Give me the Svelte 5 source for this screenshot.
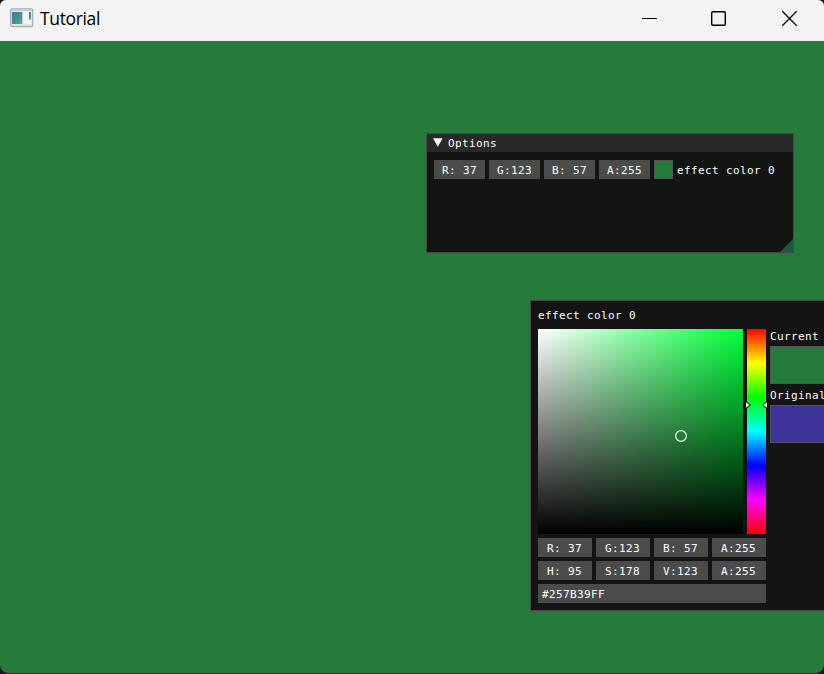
<script>
  const rgba = ['R: 37', 'G:123', 'B: 57', 'A:255'];
  const hsva = ['H: 95', 'S:178', 'V:123', 'A:255'];
</script>

<div class="app">
  <header>
    <svg class="logo" width="24" height="20" viewBox="0 0 24 20">
      <defs>
        <linearGradient id="pane" x1="0" y1="0" x2="1" y2="1">
          <stop offset="0" stop-color="#4778ae" />
          <stop offset=".55" stop-color="#419389" />
          <stop offset="1" stop-color="#55b777" />
        </linearGradient>
      </defs>
      <rect x=".7" y=".9" width="22" height="17.6" rx="1.2" fill="#e6e8ea" stroke="#a9aeb4" stroke-width="1.3" />
      <rect x="1.5" y="1.4" width="20.4" height="1.5" fill="#c5cbd1" />
      <rect x="2" y="4" width="10.3" height="12" fill="url(#pane)" />
      <rect x="13.5" y="4" width="4.8" height="8" fill="#fafafa" />
      <rect x="19" y="4" width="2" height="7.5" fill="url(#pane)" />
      <rect x="13.5" y="12.8" width="7.5" height="3.2" fill="#f3f3f3" />
    </svg>
    <span class="title">Tutorial</span>
    <svg class="controls" width="160" height="20" viewBox="0 0 160 20" fill="none" stroke="#000">
      <path d="M2 9.5h15" />
      <rect x="71.7" y="2.7" width="13.6" height="13.6" rx="1.2" stroke-width="1.4" />
      <path d="M142.3 2.3l14.4 14.4M156.7 2.3L142.3 16.7" stroke-width="1.3" />
    </svg>
  </header>

  <main>
    <section class="window options">
      <div class="bar">
        <svg width="10" height="10" viewBox="0 0 10 10"><path d="M0 .2h9.6L4.8 8.8z" fill="#fff" /></svg>
        <span>Options</span>
      </div>
      <div class="row">
        {#each rgba as v}<div class="field">{v}</div>{/each}
        <div class="swatch small"></div>
        <span class="label">effect color 0</span>
      </div>
      <div class="grip"></div>
    </section>

    <section class="window picker">
      <div class="heading">effect color 0</div>
      <div class="columns">
        <div class="square"><svg class="cursor" width="14" height="14" viewBox="0 0 14 14" fill="none">
          <circle cx="7" cy="7" r="6.2" stroke="#555" stroke-opacity=".7" />
          <circle cx="7" cy="7" r="5.4" stroke="#eee" stroke-width="1.3" />
        </svg></div>
        <div class="hue"><svg class="arrows" width="23" height="8" viewBox="0 0 23 8">
          <path d="M1 0L6 4L1 8zM22 0L17 4L22 8z" fill="#111" />
          <path d="M1 1.2L4.6 4L1 6.8zM22 1.2L18.4 4L22 6.8z" fill="#fff" />
        </svg></div>
        <div class="compare">
          <span>Current</span>
          <div class="swatch big"></div>
          <span>Original</span>
          <div class="swatch big original"></div>
        </div>
      </div>
      <div class="row">
        {#each rgba as v}<div class="field">{v}</div>{/each}
      </div>
      <div class="row">
        {#each hsva as v}<div class="field">{v}</div>{/each}
      </div>
      <div class="field hex">#257B39FF</div>
    </section>
  </main>
</div>

<style>
  :global(body) { background: #191919; }
  .app {
    width: 824px;
    height: 674px;
    display: flex;
    flex-direction: column;
    overflow: hidden;
    border-radius: 6px 6px 9px 9px;
    background: #257b39;
    border-bottom: 1px solid #303030;
    box-sizing: border-box;
    font: 11px/22px 'DejaVu Sans Mono', monospace;
    letter-spacing: 0.378px;
    color: #fff;
  }
  header {
    flex: none;
    height: 41px;
    box-sizing: border-box;
    display: flex;
    align-items: flex-start;
    padding: 8px 24px 0 10px;
    background: #f3f3f3;
  }
  .title {
    margin: -1px 0 0 6px;
    font: 17.5px/22px 'Open Sans', 'Noto Sans', sans-serif;
    letter-spacing: -0.35px;
    color: #000;
  }
  .controls { margin-left: auto; margin-top: 1px; }
  main { flex: 1; position: relative; }
  .window {
    position: absolute;
    box-sizing: border-box;
    border: 1px solid #46464b;
  }
  .options {
    left: 426px;
    top: 92px;
    width: 368px;
    height: 120px;
    background: #121512;
  }
  .bar {
    height: 18px;
    display: flex;
    align-items: center;
    gap: 5px;
    padding-left: 6px;
    background: #292929;
    line-height: 18px;
  }
  .bar span { padding-top: 2px; }
  .row { display: flex; gap: 4px; margin-bottom: 4px; }
  .options .row { padding: 8px 7px 0; }
  .field, .label { height: 19px; white-space: pre; }
  .field {
    box-sizing: border-box;
    width: 54px;
    padding-left: 9px;
    background: #4b4b4b;
  }
  .options .field { width: 51px; padding-left: 8px; background: #4a4c4a; }
  .swatch { box-sizing: border-box; border: 1px solid #505256; background: #257b39; }
  .small { width: 19px; height: 19px; }
  .grip {
    position: absolute;
    right: 0;
    bottom: 0;
    width: 13px;
    height: 13px;
    background: #1b5946;
    clip-path: polygon(100% 0, 100% 100%, 0 100%);
  }
  .picker {
    left: 530px;
    top: 259px;
    width: 374px;
    height: 311px;
    padding: 7px;
    background: #141414;
  }
  .heading { height: 21px; line-height: 16px; }
  .columns { display: flex; gap: 4px; height: 205px; margin-bottom: 4px; }
  .square {
    position: relative;
    width: 205px;
    background: linear-gradient(to bottom, transparent, #000), linear-gradient(to right, #fff, #00ff3b);
  }
  .cursor { position: absolute; left: 136px; top: 100px; }
  .hue {
    position: relative;
    width: 19px;
    background: linear-gradient(#f00, #ff0, #0f0, #0ff, #00f, #f0f, #f00);
  }
  .arrows { position: absolute; left: -2px; top: 72px; }
  .compare { display: flex; flex-direction: column; }
  .compare span { height: 17px; line-height: 16px; }
  .big { width: 100px; height: 38px; margin-bottom: 4px; }
  .original { background: #3e3399; }
  .hex { width: 228px; padding-left: 4px; }
</style>
